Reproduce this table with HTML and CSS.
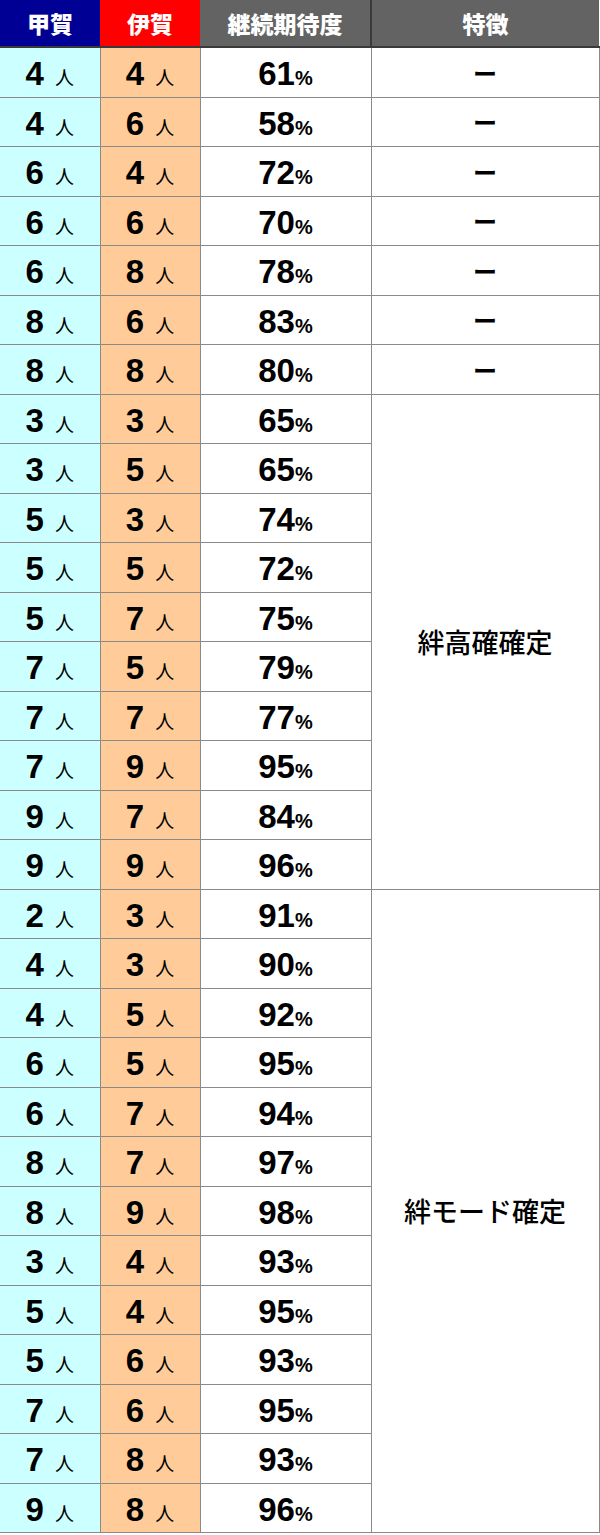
FILE: index.html
```html
<!DOCTYPE html>
<html lang="ja">
<head>
<meta charset="utf-8">
<link rel="stylesheet" href="styles.css">
</head>
<body>
<table class="tbl">
<colgroup><col class="c1"><col class="c2"><col class="c3"><col class="c4"></colgroup>
<thead>
<tr><th class="h-koga">甲賀</th><th class="h-iga">伊賀</th><th class="h-gray">継続期待度</th><th class="h-gray h-last">特徴</th></tr>
</thead>
<tbody>
<tr><td class="koga"><span class="n">4</span><span class="p">人</span></td><td class="iga"><span class="n">4</span><span class="p">人</span></td><td class="pct"><span class="n">61</span><span class="pc">%</span></td><td class="feat"><span class="dash">ー</span></td></tr>
<tr><td class="koga"><span class="n">4</span><span class="p">人</span></td><td class="iga"><span class="n">6</span><span class="p">人</span></td><td class="pct"><span class="n">58</span><span class="pc">%</span></td><td class="feat"><span class="dash">ー</span></td></tr>
<tr><td class="koga"><span class="n">6</span><span class="p">人</span></td><td class="iga"><span class="n">4</span><span class="p">人</span></td><td class="pct"><span class="n">72</span><span class="pc">%</span></td><td class="feat"><span class="dash">ー</span></td></tr>
<tr><td class="koga"><span class="n">6</span><span class="p">人</span></td><td class="iga"><span class="n">6</span><span class="p">人</span></td><td class="pct"><span class="n">70</span><span class="pc">%</span></td><td class="feat"><span class="dash">ー</span></td></tr>
<tr><td class="koga"><span class="n">6</span><span class="p">人</span></td><td class="iga"><span class="n">8</span><span class="p">人</span></td><td class="pct"><span class="n">78</span><span class="pc">%</span></td><td class="feat"><span class="dash">ー</span></td></tr>
<tr><td class="koga"><span class="n">8</span><span class="p">人</span></td><td class="iga"><span class="n">6</span><span class="p">人</span></td><td class="pct"><span class="n">83</span><span class="pc">%</span></td><td class="feat"><span class="dash">ー</span></td></tr>
<tr><td class="koga"><span class="n">8</span><span class="p">人</span></td><td class="iga"><span class="n">8</span><span class="p">人</span></td><td class="pct"><span class="n">80</span><span class="pc">%</span></td><td class="feat"><span class="dash">ー</span></td></tr>
<tr><td class="koga"><span class="n">3</span><span class="p">人</span></td><td class="iga"><span class="n">3</span><span class="p">人</span></td><td class="pct"><span class="n">65</span><span class="pc">%</span></td><td class="feat big" rowspan="10">絆高確確定</td></tr>
<tr><td class="koga"><span class="n">3</span><span class="p">人</span></td><td class="iga"><span class="n">5</span><span class="p">人</span></td><td class="pct"><span class="n">65</span><span class="pc">%</span></td></tr>
<tr><td class="koga"><span class="n">5</span><span class="p">人</span></td><td class="iga"><span class="n">3</span><span class="p">人</span></td><td class="pct"><span class="n">74</span><span class="pc">%</span></td></tr>
<tr><td class="koga"><span class="n">5</span><span class="p">人</span></td><td class="iga"><span class="n">5</span><span class="p">人</span></td><td class="pct"><span class="n">72</span><span class="pc">%</span></td></tr>
<tr><td class="koga"><span class="n">5</span><span class="p">人</span></td><td class="iga"><span class="n">7</span><span class="p">人</span></td><td class="pct"><span class="n">75</span><span class="pc">%</span></td></tr>
<tr><td class="koga"><span class="n">7</span><span class="p">人</span></td><td class="iga"><span class="n">5</span><span class="p">人</span></td><td class="pct"><span class="n">79</span><span class="pc">%</span></td></tr>
<tr><td class="koga"><span class="n">7</span><span class="p">人</span></td><td class="iga"><span class="n">7</span><span class="p">人</span></td><td class="pct"><span class="n">77</span><span class="pc">%</span></td></tr>
<tr><td class="koga"><span class="n">7</span><span class="p">人</span></td><td class="iga"><span class="n">9</span><span class="p">人</span></td><td class="pct"><span class="n">95</span><span class="pc">%</span></td></tr>
<tr><td class="koga"><span class="n">9</span><span class="p">人</span></td><td class="iga"><span class="n">7</span><span class="p">人</span></td><td class="pct"><span class="n">84</span><span class="pc">%</span></td></tr>
<tr><td class="koga"><span class="n">9</span><span class="p">人</span></td><td class="iga"><span class="n">9</span><span class="p">人</span></td><td class="pct"><span class="n">96</span><span class="pc">%</span></td></tr>
<tr><td class="koga"><span class="n">2</span><span class="p">人</span></td><td class="iga"><span class="n">3</span><span class="p">人</span></td><td class="pct"><span class="n">91</span><span class="pc">%</span></td><td class="feat big" rowspan="13">絆モード確定</td></tr>
<tr><td class="koga"><span class="n">4</span><span class="p">人</span></td><td class="iga"><span class="n">3</span><span class="p">人</span></td><td class="pct"><span class="n">90</span><span class="pc">%</span></td></tr>
<tr><td class="koga"><span class="n">4</span><span class="p">人</span></td><td class="iga"><span class="n">5</span><span class="p">人</span></td><td class="pct"><span class="n">92</span><span class="pc">%</span></td></tr>
<tr><td class="koga"><span class="n">6</span><span class="p">人</span></td><td class="iga"><span class="n">5</span><span class="p">人</span></td><td class="pct"><span class="n">95</span><span class="pc">%</span></td></tr>
<tr><td class="koga"><span class="n">6</span><span class="p">人</span></td><td class="iga"><span class="n">7</span><span class="p">人</span></td><td class="pct"><span class="n">94</span><span class="pc">%</span></td></tr>
<tr><td class="koga"><span class="n">8</span><span class="p">人</span></td><td class="iga"><span class="n">7</span><span class="p">人</span></td><td class="pct"><span class="n">97</span><span class="pc">%</span></td></tr>
<tr><td class="koga"><span class="n">8</span><span class="p">人</span></td><td class="iga"><span class="n">9</span><span class="p">人</span></td><td class="pct"><span class="n">98</span><span class="pc">%</span></td></tr>
<tr><td class="koga"><span class="n">3</span><span class="p">人</span></td><td class="iga"><span class="n">4</span><span class="p">人</span></td><td class="pct"><span class="n">93</span><span class="pc">%</span></td></tr>
<tr><td class="koga"><span class="n">5</span><span class="p">人</span></td><td class="iga"><span class="n">4</span><span class="p">人</span></td><td class="pct"><span class="n">95</span><span class="pc">%</span></td></tr>
<tr><td class="koga"><span class="n">5</span><span class="p">人</span></td><td class="iga"><span class="n">6</span><span class="p">人</span></td><td class="pct"><span class="n">93</span><span class="pc">%</span></td></tr>
<tr><td class="koga"><span class="n">7</span><span class="p">人</span></td><td class="iga"><span class="n">6</span><span class="p">人</span></td><td class="pct"><span class="n">95</span><span class="pc">%</span></td></tr>
<tr><td class="koga"><span class="n">7</span><span class="p">人</span></td><td class="iga"><span class="n">8</span><span class="p">人</span></td><td class="pct"><span class="n">93</span><span class="pc">%</span></td></tr>
<tr><td class="koga"><span class="n">9</span><span class="p">人</span></td><td class="iga"><span class="n">8</span><span class="p">人</span></td><td class="pct"><span class="n">96</span><span class="pc">%</span></td></tr>
</tbody>
</table>
</body>
</html>
```

FILE: styles.css
```css
html, body {
  margin: 0;
  padding: 0;
  background: #ffffff;
}

.tbl {
  border-collapse: collapse;
  table-layout: fixed;
  width: 599px;
  font-family: "Liberation Sans", "Noto Sans CJK JP", sans-serif;
  color: #000000;
}

.c1 { width: 100px; }
.c2 { width: 100px; }
.c3 { width: 171px; }
.c4 { width: 228px; }

.tbl th {
  height: 46px;
  padding: 0;
  font-family: "Noto Sans CJK JP", sans-serif;
  font-weight: 900;
  font-size: 23px;
  color: #ffffff;
  text-align: center;
  vertical-align: middle;
  border-bottom: 2px solid #3a3a3a;
}

.h-koga { background: #000094; }
.h-iga { background: #ff0000; }
.h-gray { background: #636363; }
.h-last { border-left: 2px solid #3a3a3a; }

.tbl td {
  height: 48.5px;
  padding: 0;
  text-align: center;
  vertical-align: middle;
  border: 1px solid #8a8a8a;
  white-space: nowrap;
}

.tbl tbody tr td:first-child { border-left: none; }

.koga { background: #ccffff; }
.iga { background: #ffcc99; }
.pct { background: #ffffff; }
.feat { background: #ffffff; }

.n {
  font-family: "Liberation Sans", sans-serif;
  font-weight: 700;
  font-size: 33px;
  position: relative;
  top: 2px;
}

.p {
  font-family: "Noto Sans CJK JP", sans-serif;
  font-weight: 400;
  font-size: 19px;
  margin-left: 11px;
  position: relative;
  top: 2px;
}

.pc {
  font-family: "Liberation Sans", sans-serif;
  font-weight: 700;
  font-size: 20px;
  position: relative;
  top: 2px;
}

.dash {
  font-family: "Noto Sans CJK JP", sans-serif;
  font-weight: 700;
  font-size: 24px;
}

.big {
  font-family: "Noto Sans CJK JP", sans-serif;
  font-weight: 500;
  font-size: 27px;
  color: #000000;
}
```
